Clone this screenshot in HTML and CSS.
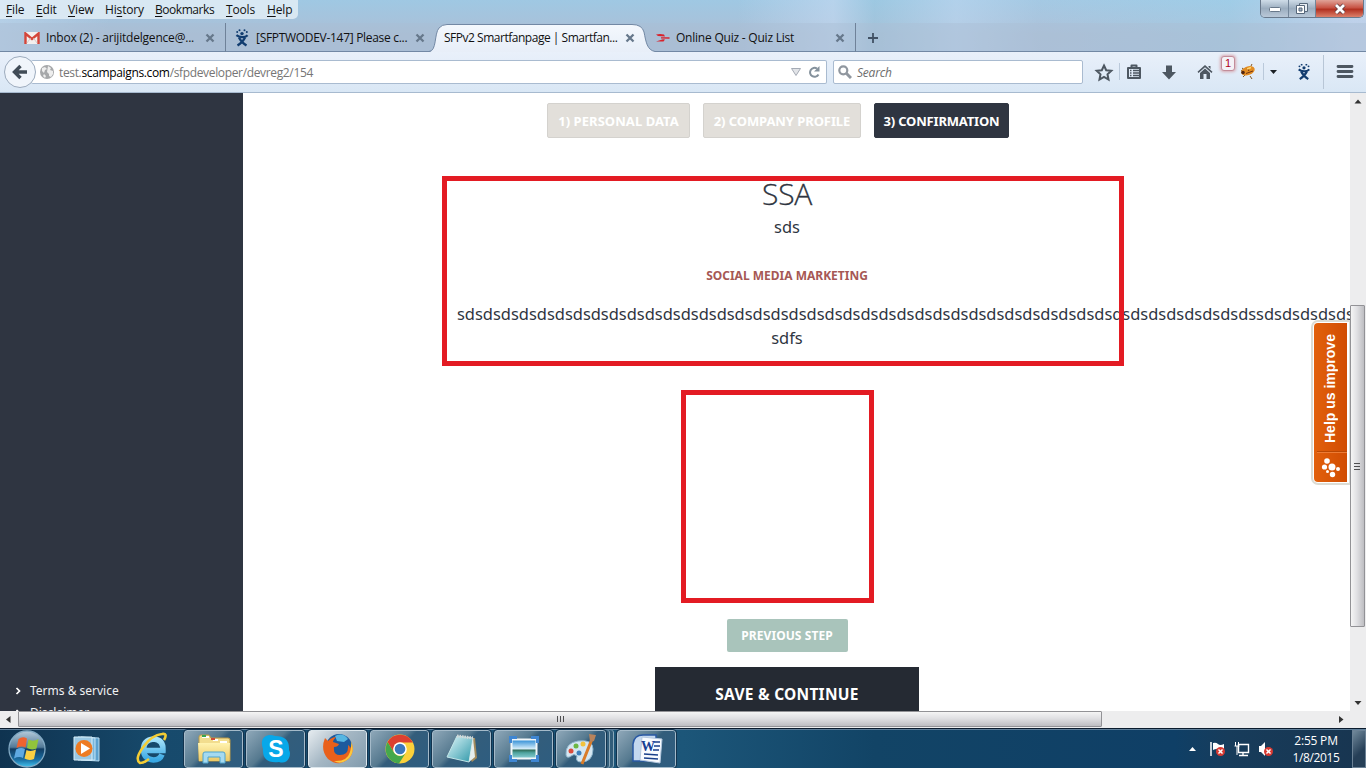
FILE: index.html
```html
<!DOCTYPE html>
<html lang="en">
<head>
<meta charset="utf-8">
<title>SFPv2 Smartfanpage</title>
<link rel="stylesheet" href="styles.css">
</head>
<body>
<svg width="0" height="0" class="defs">
  <defs>
    <symbol id="close" viewBox="0 0 10 10"><path d="M1.5 1.5l7 7M8.5 1.5l-7 7" stroke="#66788b" stroke-width="2.3"/></symbol>
    <symbol id="jira" viewBox="0 0 16 18"><g fill="#123d70"><circle cx="8" cy="4.6" r="1.7"/><circle cx="3.2" cy="3" r="1"/><circle cx="5.5" cy="1.2" r="1"/><circle cx="10.5" cy="1.2" r="1"/><circle cx="12.8" cy="3" r="1"/></g><path d="M2.400 6.200Q4.500 8 8 8.200T13.600 6.200" fill="none" stroke="#123d70" stroke-width="2.200"/><path d="M5 8.500Q7 13 12.500 16.500M11 8.500Q9 13 3.500 16.500" fill="none" stroke="#123d70" stroke-width="2.300"/></symbol>
    <symbol id="badx" viewBox="0 0 8 8"><circle cx="4" cy="4" r="4" fill="#d93a32"/><path d="M2.2 2.2l3.6 3.6M5.8 2.2L2.2 5.8" stroke="#fff" stroke-width="1.3"/></symbol>
    <linearGradient id="tabfill" x2="0" y2="1"><stop stop-color="#f4f8fd"/><stop offset="1" stop-color="#e7eef8"/></linearGradient>
    <linearGradient id="glass" x2="0" y2="1"><stop stop-color="#b5cbdb"/><stop offset=".45" stop-color="#537a98"/><stop offset=".5" stop-color="#123d63"/><stop offset=".8" stop-color="#1a6fa4"/><stop offset="1" stop-color="#42c4ef"/></linearGradient>
    <linearGradient id="gold" x2="0" y2="1"><stop stop-color="#fff3b0"/><stop offset="1" stop-color="#ecc965"/></linearGradient>
    <linearGradient id="ieb" x2="0" y2="1"><stop stop-color="#a8e3fa"/><stop offset="1" stop-color="#38a8e4"/></linearGradient>
    <linearGradient id="sea" x2="0" y2="1"><stop stop-color="#2688d4"/><stop offset=".5" stop-color="#d9effa"/><stop offset=".55" stop-color="#2e6b58"/><stop offset=".7" stop-color="#4fa5a0"/><stop offset="1" stop-color="#8fd0d8"/></linearGradient>
    <linearGradient id="pad" x2="1" y2="1"><stop stop-color="#e0f7fa"/><stop offset="1" stop-color="#2e97a8"/></linearGradient>
  </defs>
</svg>
<div class="screen">
  <header class="titlebar">
    <nav class="menu"><span class="m1"><u>F</u>ile</span><span class="m2"><u>E</u>dit</span><span class="m3"><u>V</u>iew</span><span class="m4">Hi<u>s</u>tory</span><span class="m5"><u>B</u>ookmarks</span><span class="m6"><u>T</u>ools</span><span class="m7"><u>H</u>elp</span></nav>
    <div class="winbtns">
      <span class="wb min"><svg width="12" height="6"><rect x=".5" y=".5" width="11" height="4" rx="1" fill="#fff" stroke="#68788a"/></svg></span>
      <span class="wb max"><svg width="14" height="13"><path d="M4.500 1.500h8v8h-8z" fill="#e8eef4" stroke="#56677a"/><path d="M1.500 3.500h8v8h-8z" fill="#fff" stroke="#56677a"/><path d="M4 6h3v3H4z" fill="#9fb0c0" stroke="#56677a"/></svg></span>
      <span class="wb x"><svg width="14" height="12"><path d="M3 2l8 8M11 2l-8 8" stroke="#5d3b40" stroke-width="4.4"/><path d="M3 2l8 8M11 2l-8 8" stroke="#fff" stroke-width="2.8"/></svg></span>
    </div>
  </header>
  <div class="tabs">
    <div class="tab t1"><svg class="fav" width="16" height="12" viewBox="0 0 16 12"><path d="M1 0h14v12H1z" fill="#f4efee"/><path d="M1.5 12V1.5L8 7l6.5-5.500V12" fill="none" stroke="#d44539" stroke-width="2.4"/><path d="M3 11l3.500-5M13 11L9.500 6" stroke="#d5cbc9" fill="none"/></svg><span class="tt">Inbox (2) - arijitdelgence@...</span><svg class="cl" width="10" height="10"><use href="#close"/></svg></div>
    <div class="tab t2"><svg class="fav" width="16" height="18"><use href="#jira"/></svg><span class="tt">[SFPTWODEV-147] Please c...</span><svg class="cl" width="10" height="10"><use href="#close"/></svg></div>
    <div class="tab t3"><svg class="shape" width="232" height="30" viewBox="0 0 232 30"><path d="M0 29C8 28 5 11 10 5Q13 1.500 18 1.500H203Q213 1.500 215 9C217 19 218 27 226 28.500H232V30H0z" fill="url(#tabfill)"/><path d="M0 28.500C8 28 5 11 10 5Q13 1.500 18 1.500H203Q213 1.500 215 9C217 19 218 27 226 28.500H232" fill="none" stroke="#7288a4"/></svg><span class="tt">SFPv2 Smartfanpage | Smartfan...</span><svg class="cl" width="10" height="10"><use href="#close"/></svg></div>
    <div class="tab t4"><svg class="fav" width="14" height="10" viewBox="0 0 14 10"><path d="M0 1.500Q4 .5 8 1.500L9 3.500 2 3zM5 4.200h8.500v1.600L5 5.600zM0 8.500L7 6.300l2 .3-1.500 1.900z" fill="#d8222c"/></svg><span class="tt">Online Quiz - Quiz List</span><svg class="cl" width="10" height="10"><use href="#close"/></svg></div>
    <svg class="plus" width="10" height="10"><path d="M5 0v10M0 5h10" stroke="#415164" stroke-width="1.800"/></svg>
  </div>
  <div class="toolbar">
    <div class="back"><svg width="16" height="16"><path d="M15 8H3M8.500 2L2.500 8l6 6" fill="none" stroke="#414c57" stroke-width="3.400"/></svg></div>
    <div class="url"><svg class="globe" width="14" height="14"><circle cx="7" cy="7" r="7" fill="#a6a8aa"/><path d="M2 3l3-1 2 2-2 1-1 3-2-2zM8 1l3 2-1 2 3 1v3l-2 3-2-1V9L7 7zM4 9l2 2-1 2-2-2z" fill="#eee"/></svg><span class="addr">test.<b>scampaigns.com</b>/sfpdeveloper/devreg2/154</span><svg class="drop" width="10" height="8"><path d="M.5.5h9L5 7.500z" fill="#e2e4e8" stroke="#a5abb5"/></svg><svg class="reload" width="12" height="12"><path d="M10.500 8.500A4.500 4.500 0 1 1 9 2.500" fill="none" stroke="#84919c" stroke-width="2"/><path d="M11.500 0v5.500H6z" fill="#84919c"/></svg></div>
    <div class="search"><svg width="14" height="14"><circle cx="5.300" cy="5.300" r="4" fill="none" stroke="#90979f" stroke-width="2.200"/><path d="M8.500 8.500l4.500 4.500" stroke="#90979f" stroke-width="3"/></svg><span>Search</span></div>
    <svg class="icons" width="283" height="41" viewBox="0 0 283 41">
      <path d="M21 13.500l2.200 4.700 5.100.6-3.800 3.500 1 5.200-4.500-2.600-4.500 2.600 1-5.200-3.800-3.500 5.100-.6z" fill="none" stroke="#4d5761" stroke-width="2"/>
      <path d="M36.500 11v17M180.500 11v17" stroke="#bac9da"/><path d="M240.500 3v34" stroke="#b8c6d6"/>
      <path d="M45 16h12v10H45zM48.500 15.500V13.500h5v2" fill="none" stroke="#4d5761" stroke-width="2" stroke-linejoin="round"/><path d="M47 18.500h1.500M50 18.500h6M47 21h1.500M50 21h6M47 23.500h1.500M50 23.500h6" stroke="#4d5761" stroke-width="1.300"/>
      <path d="M83 13.500h6V20h4l-7 7.500L79 20h4z" fill="#4d5761"/>
      <path d="M122 13l7.500 6.800-1 1.200-6.500-5.800-6.500 5.800-1-1.200zM117 21l5-4.500 5 4.500v6h-3.500v-5h-3v5H117z" fill="#4d5761"/><path d="M125.500 14h2v3l-2-2z" fill="#4d5761"/>
      <path d="M158 19l5-3M160 25l3-3M167 24l2 3M159 16l4 3M168 14l1-2" stroke="#81551e"/><ellipse cx="165" cy="18.800" rx="7" ry="4.300" transform="rotate(-20 165 18.800)" fill="#e28c23"/><path d="M163 21.500l7-2.500M164 16l2 3" stroke="#6e3311"/><circle cx="160" cy="20.500" r="1.800" fill="#52250f"/><path d="M164 17l4-1.500" stroke="#ffd771" stroke-width="1.500"/>
      <path d="M187 18h7l-3.500 4z" fill="#1b2025"/>
      <svg x="213" y="11.500" width="16" height="17"><use href="#jira"/></svg>
      <path d="M255 14.500h14M255 19.500h14M255 24.500h14" stroke="#4d5761" stroke-width="2.800" stroke-linecap="round"/>
    </svg>
    <span class="badge">1</span>
  </div>
  <div class="viewrow">
    <div class="view">
      <aside class="side"><div class="link"><svg width="6" height="8"><path d="M1.500 1L4.500 4l-3 3" fill="none" stroke="#fff" stroke-width="1.700"/></svg><span>Terms &amp; service</span></div><div class="link"><svg width="6" height="8"><path d="M1.500 1L4.500 4l-3 3" fill="none" stroke="#fff" stroke-width="1.700"/></svg><span>Disclaimer</span></div></aside>
      <main class="page">
        <div class="steps"><span class="step s1"><i>1) PERSONAL DATA</i></span><span class="step s2"><i>2) COMPANY PROFILE</i></span><span class="step s3 on"><i>3) CONFIRMATION</i></span></div>
        <section class="info"><h1>SSA</h1><p class="sub">sds</p><h2>SOCIAL MEDIA MARKETING</h2><p class="long">sdsdsdsdsdsdsdsdsdsdsdsdsdsdsdsdsdsdsdsdsdsdsdsdsdsdsdsdsdsdsdsdsdsdsdsdsdsdsdsdsdsdsdsdssdsdsdsdsdsdsd</p><p class="last">sdfs</p></section>
        <div class="actions"><span class="prev"><i>PREVIOUS STEP</i></span><span class="save"><i>SAVE &amp; CONTINUE</i></span></div>
      </main>
      <div class="mark m-a"></div><div class="mark m-b"></div>
      <div class="help"><span>Help us improve</span><svg width="34" height="31"><path d="M3 .5h30" stroke="#b94804"/><path d="M3 1.500h30" stroke="#ed7c35"/><g fill="#fff"><circle cx="18" cy="16" r="3.500"/><circle cx="13" cy="10" r="2.800"/><circle cx="10.500" cy="16" r="2.600"/><circle cx="13.500" cy="20.500" r="1.500"/><circle cx="18.500" cy="23.500" r="2.700"/><circle cx="24" cy="18" r="2"/></g></svg></div>
    </div>
    <div class="vbar"><svg width="16" height="17"><path d="M4.500 10.500h7L8 6.500z" fill="#333"/></svg><div class="vthumb"><svg width="7" height="9"><path d="M0 1.500h6M0 4.500h6M0 7.500h6" stroke="#4e4e50"/></svg></div><svg class="down" width="16" height="17"><path d="M4.500 7h7L8 11z" fill="#333"/></svg></div>
  </div>
  <div class="hbar"><svg width="18" height="17"><path d="M10.500 5v7L6 8.500z" fill="#333"/></svg><div class="hthumb"><svg width="9" height="7"><path d="M1.500 0v6M4.500 0v6M7.500 0v6" stroke="#4e4e50"/></svg></div><svg class="right" width="18" height="17"><path d="M7 5v7l4.500-3.500z" fill="#333"/></svg></div>
  <footer class="taskbar">
    <div class="app plain start"><svg width="40" height="38" viewBox="0 0 40 38"><circle cx="20" cy="19" r="18" fill="url(#glass)" stroke="#82aac4" stroke-width="1.300"/><path d="M11.500 9q4-3 8.500-.5l-1.500 9q-4-2-9 .5z" fill="#ee6330"/><path d="M21.500 9.500q4.500 2.500 10-.5l-2 9.500q-5 2-9.500-.5z" fill="#91c43c"/><path d="M9 19.500q5-2.500 9-.5l-2 9q-4-2-9 .5z" fill="#5ea9e2"/><path d="M19.500 20q4.500 2 9.500-.5l-2 9.500q-5 2-9.500-.5z" fill="#fbd043"/></svg></div>
    <div class="app plain"><svg width="28" height="28" viewBox="0 0 28 28"><path d="M8 2l18 1v23l-18-1z" fill="#5ba1ce" stroke="#b9dcf0"/><path d="M5 2l17 1v22H5z" fill="#79b7dd" stroke="#c7e5f5"/><path d="M1 2h18v23H1z" fill="#9bc8e3" stroke="#d9eff9"/><circle cx="11" cy="13.500" r="8.500" fill="#ee7b22"/><path d="M8 8l9 5.500L8 19z" fill="#fff"/></svg></div>
    <div class="app plain ie"><svg width="34" height="34" viewBox="0 0 34 34"><path d="M27 22.500Q25 28 18.500 28 8.500 27 8.500 17.500T18.500 7Q28.500 7.500 28 18.500H10" fill="none" stroke="url(#ieb)" stroke-width="5.500"/><path d="M29 8Q33 1 27 2 17 3 9 14-1 27 5 31q4 0 9-4" fill="none" stroke="#f3cd35" stroke-width="2.600"/></svg></div>
    <div class="app"><svg width="34" height="30" viewBox="0 0 34 30"><path d="M2 3q0-2 2-2h8l2 3h17q2 0 2 2v21H2z" fill="#f2dd8e" stroke="#b99947"/><path d="M5 3h7M16 6h5M23 8h7" stroke="#fff" stroke-width="2"/><path d="M5 2h4" stroke="#38a54d" stroke-width="2"/><path d="M14 5h4" stroke="#ce4b36" stroke-width="2"/><path d="M1 9h32l-1 18H2z" fill="url(#gold)"/><path d="M6 29V20q0-2 2-2h18q2 0 2 2v9h-5v-6H11v6z" fill="#a5daf0" stroke="#4fa4ce"/></svg></div>
    <div class="app"><svg width="30" height="30" viewBox="0 0 30 30"><path d="M8 1q4 0 6 1 15 0 14 14 2 3 0 8-3 6-10 4Q1 30 2 15-2 3 8 1z" fill="#08a8e9"/><text x="15" y="23" text-anchor="middle" class="g-s">S</text></svg></div>
    <div class="app active"><svg width="32" height="32" viewBox="0 0 32 32"><circle cx="17" cy="14" r="13" fill="#1d5a9e"/><path d="M13 3q8-4 13 3l-4 3-7-1z" fill="#56b6e1"/><path d="M29 8Q34 20 25 27 16 34 6 26-2 17 3 5q2 2 3 3 4-4 8-4-3 3-3 5l6 2q-1 3-5 3-1 8 6 8 9 0 8-10 2 1 2 3 3-3 1-7z" fill="#e9601b"/><path d="M29 8q5 12-4 19-7 5-13 1 13 1 16-9 2-7 1-11z" fill="#fcc83e"/></svg></div>
    <div class="app"><svg width="30" height="30" viewBox="0 0 30 30"><circle cx="15" cy="15" r="14.500" fill="#fbd13a"/><path d="M2.500 8A14.500 14.500 0 0 1 28 8.500H15a7 7 0 0 0-6 10z" fill="#dc4030"/><path d="M2.500 8A14.500 14.500 0 0 0 14 29.500L21 18.500a7 7 0 0 1-12 0z" fill="#45a84c"/><circle cx="15" cy="15" r="6.800" fill="#fff"/><circle cx="15" cy="15" r="5.300" fill="#3b78bd"/></svg></div>
    <div class="app"><svg width="34" height="30" viewBox="0 0 34 30"><path d="M13 3l17 1 2 20-5 4z" fill="#a28b5d"/><path d="M12 2l16 2-4 24-22-5z" fill="url(#pad)" stroke="#c2e6e8"/><path d="M28 4l2 19-6 5z" fill="#e5eeee"/><path d="M12 2l16 2" stroke="#d3d7d8" stroke-width="3" stroke-dasharray="1.500 1"/></svg></div>
    <div class="app"><svg width="30" height="26" viewBox="0 0 30 26"><path d="M2.500 3.500h25v19h-25z" fill="url(#sea)" stroke="#f2f7f9" stroke-width="2"/><path d="M1.500 7V1.500H8M22 1.500h6.500V7M28.500 19v5.500H22M8 24.500H1.500V19" fill="none" stroke="#3f86d2" stroke-width="3"/></svg></div>
    <div class="app stack"><svg width="34" height="32" viewBox="0 0 34 32"><path d="M2 22Q1 10 14 8q15-2 15 8 0 13-12 13-6 0-4-6-3-3-6 0-4 3-5-1z" fill="#d5e7f2" stroke="#8eb5cd"/><circle cx="7" cy="18" r="2.500" fill="#db4c3c"/><circle cx="12" cy="13" r="2.500" fill="#6cb843"/><circle cx="19" cy="11" r="2.500" fill="#f2c33d"/><circle cx="15" cy="20" r="2.500" fill="#3e7fbb"/><path d="M28 6L18 31" stroke="#da7c28" stroke-width="3"/><path d="M25 1l7 1-2 6-4 1z" fill="#b7835c"/></svg></div>
    <div class="app word"><svg width="32" height="30" viewBox="0 0 32 30"><path d="M2 27V10Q3 1 12 1h13v26z" fill="#c4d8ef" stroke="#2858a4" stroke-width="1.500"/><path d="M11 3l20 2-2 24-20-3z" fill="#f8fbff" stroke="#b3c7de"/><path d="M23 8h6M23 12h6M22 16h6M13 20l14 1M13 24l14 1" stroke="#183f8a" stroke-width="1.700"/><text x="10" y="17" class="g-w">W</text></svg></div>
    <div class="tray"><svg width="90" height="20" viewBox="0 0 90 20"><path d="M3 12h7l-3.500-4z" fill="#fff"/><path d="M25 3v14" stroke="#fff" stroke-width="1.500"/><path d="M27 4q3-1 5 1t6 0v6q-3 2-5 0t-6 0z" fill="#fff"/><svg x="30" y="8" width="9" height="9" viewBox="0 0 8 8"><use href="#badx"/></svg><path d="M52.500 5.500h10v8h-10zM57 14v3M53 16.500h9" fill="none" stroke="#fff" stroke-width="1.400"/><path d="M49.500 3v4M52.500 3v4M48.500 7h5M51 7v9" stroke="#fff" fill="none"/><path d="M73 7h2l4-4v14l-4-4h-2z" fill="#fff"/><svg x="78" y="8" width="9" height="9" viewBox="0 0 8 8"><use href="#badx"/></svg></svg></div>
    <div class="clock"><span class="c1">2:55 PM</span><span class="c2">1/8/2015</span></div>
    <div class="peek"></div>
  </footer>
</div>
</body>
</html>
```
FILE: styles.css
```css
* { box-sizing: border-box; }
body { margin: 0; font-family: "Open Sans", "Noto Sans", sans-serif; color: #111; overflow: hidden; }
.defs { position: absolute; }
svg { display: block; flex: none; }
i { font-style: normal; }
.screen { width: 1366px; height: 768px; display: flex; flex-direction: column; white-space: nowrap; overflow: hidden;
  background: linear-gradient(90deg, rgba(190,215,238,.6), rgba(180,205,230,0) 8%, rgba(190,210,235,0) 54%, rgba(198,218,242,.6) 61%, rgba(150,200,222,.3) 64%, rgba(190,215,240,.6) 70%, rgba(185,205,230,.2) 76%, rgba(160,215,240,.3) 90%, rgba(200,215,240,.7) 99%), linear-gradient(#9fc8e3, #a6c3dc 20px, #a9bed4 34px, #a9bdd5 52px); }
.titlebar { height: 23px; display: flex; justify-content: space-between; }
.menu { width: 298px; height: 19px; display: flex; padding-left: 6px; background: rgba(226,237,246,.85); border-radius: 0 0 5px 0; font-size: 12px; line-height: 19px; letter-spacing: -.15px; }
.menu u { text-underline-offset: 2px; }
.m1 { width: 30px; } .m2 { width: 32px; } .m3 { width: 37px; } .m4 { width: 50px; } .m5 { width: 71px; letter-spacing: -.45px; } .m6 { width: 41px; }
.winbtns { display: flex; width: 104px; height: 18px; margin-right: 2px; border: 1px solid #69798c; border-top: 0; border-radius: 0 0 5px 5px; overflow: hidden; }
.wb { display: flex; align-items: center; justify-content: center; background: linear-gradient(#cfdce8, #9badbf 50%, #b9c8d8); border-right: 1px solid #73869a; }
.min { width: 28px; padding-top: 3px; } .max { width: 27px; } .x { flex: 1; border: 0; background: linear-gradient(#e0a398, #c85445 45%, #b23121 55%, #dc806b); }
.tabs { height: 29px; display: flex; border-bottom: 1px solid #7288a4; font-size: 12px; background: rgba(170,190,212,.45); }
.tab { display: flex; align-items: center; height: 29px; position: relative; flex: none; }
.cl { margin-left: auto; }
.fav { margin-right: 6px; }
.t1 { width: 226px; padding: 0 10px 0 24px; border-right: 1px solid #6f8299; }
.t1 .tt { letter-spacing: -.2px; } .t2 .tt { letter-spacing: -.3px; } .t3 .tt { letter-spacing: -.48px; } .t4 .tt { letter-spacing: -.22px; }
.t2 { width: 207px; padding: 0 8px; }
.t3 { width: 217px; padding: 0 15px 0 11px; }
.shape { position: absolute; left: -4px; top: 0; }
.t3 .tt, .t3 .cl { position: relative; }
.t4 { width: 206px; padding: 0 10px 0 6px; border-right: 1px solid #6f8299; }
.plus { margin: 10px 0 0 12px; }
.toolbar { height: 41px; display: flex; align-items: center; position: relative; background: linear-gradient(#e9f0fa, #d9e7f5); border-bottom: 1px solid #a7bacf; }
.back { width: 32px; height: 32px; margin-left: 4px; border: 1px solid #9cabbd; border-radius: 50%; background: #f0f5fb; display: flex; align-items: center; justify-content: center; z-index: 1; }
.url { width: 796px; height: 24px; margin-left: -5px; display: flex; align-items: center; padding: 0 6px 0 9px; border: 1px solid #a9bbd0; border-left: 0; border-radius: 2px; background: #fff; font-size: 12px; color: #767676; }
.addr { margin-left: 5px; letter-spacing: -.35px; } .addr b { font-weight: 400; color: #000; }
.drop { margin-left: auto; margin-right: 7px; }
.search { width: 250px; height: 24px; margin-left: 6px; display: flex; align-items: center; border: 1px solid #a9bbd0; border-radius: 2px; background: #fff; padding-left: 4px; font-size: 12px; font-style: italic; color: #6d6d6d; }
.search span { margin-left: 5px; letter-spacing: -.2px; }
.badge { position: absolute; left: 1221px; top: 4px; width: 14px; height: 15px; border-radius: 3px; border: 1px solid #c28d9a; background: #f4f2f7; box-shadow: 0 0 3px 1px #d7a8b0; color: #b00018; font: 11px/13px "Liberation Sans", sans-serif; text-align: center; }
.viewrow { height: 618px; display: flex; }
.view { width: 1350px; display: flex; position: relative; overflow: hidden; background: #fff; }
.side { width: 243px; background: #2f3541; padding-top: 588px; color: #f0f1f3; font: 12px/20px "Noto Sans", sans-serif; overflow: hidden; }
.link { display: flex; align-items: center; padding-left: 15px; gap: 9px; height: 20px; margin-bottom: 2px; }
.page { width: 1107px; display: flex; flex-direction: column; font-family: "Noto Sans", sans-serif; color: #2f3541; }
.steps { display: flex; margin: 10px 0 0 304px; gap: 13px; font-size: 13px; font-weight: 700; color: #fff; }
.step { height: 35px; display: flex; align-items: center; justify-content: center; background: #e2dfda; border: 1px solid #d4d2ce; border-radius: 2px; }
.s1 { width: 143px; letter-spacing: .06px; } .s2 { width: 158px; letter-spacing: -.08px; } .s3 { width: 135px; letter-spacing: -.18px; }
.step.on { background: #2f3541; border-color: #2f3541; }
.info { width: 660px; margin: 38px 0 0 214px; text-align: center; }
.info h1 { margin: 0; font: 300 30px/36px "Open Sans", sans-serif; letter-spacing: -.3px; -webkit-text-stroke: .3px #2f3541; }
.info p { margin: 0; font-size: 16.450px; line-height: 24px; }
.info .sub { padding-top: 3px; height: 27px; }
.info h2 { margin: 25px 0 0; font-size: 12px; line-height: 24px; color: #a65855; font-weight: 700; height: 38px; }
.info .long { text-align: left; }
.actions { width: 264px; margin: 269px 0 0 412px; display: flex; flex-direction: column; align-items: center; color: #fff; font-weight: 700; }
.prev { width: 121px; height: 33px; background: #a9c4bb; border-radius: 2px; font-size: 12px; display: flex; align-items: center; justify-content: center; letter-spacing: .07px; }
.save { width: 264px; height: 53px; margin-top: 15px; background: #252a33; font-size: 15.500px; letter-spacing: .25px; display: flex; align-items: center; justify-content: center; }
.mark { position: absolute; border: 5px solid #e31b23; }
.m-a { left: 442px; top: 83px; width: 682px; height: 190px; }
.m-b { left: 681px; top: 297px; width: 193px; height: 213px; }
.help { position: absolute; left: 1312px; top: 228px; width: 38px; height: 163px; background: linear-gradient(90deg, #e2600c, #d14d02) content-box; padding: 2px 3px 2px 2px; border-radius: 6px 0 0 6px; box-shadow: 0 0 0 1px #dcdcd4; background-color: #fff; display: flex; flex-direction: column; align-items: center; }
.help span { height: 128px; writing-mode: vertical-rl; transform: rotate(180deg); color: #fff; font: bold 14px/33px "Liberation Sans", sans-serif; text-align: center; padding-bottom: 3px; }
.vbar { width: 16px; background: #ededee; display: flex; flex-direction: column; }
.vthumb { width: 15px; height: 322px; margin-top: 195px; border: 1px solid #929296; border-radius: 1px; background: linear-gradient(90deg, #f5f5f5, #e0e0e3 45%, #bebec2); display: flex; align-items: center; justify-content: center; }
.down { margin-top: auto; }
.hbar { height: 17px; display: flex; background: #ededee; }
.hthumb { width: 1084px; height: 16px; border: 1px solid #929296; border-radius: 1px; background: linear-gradient(#f5f5f5, #e0e0e3 45%, #bebec2); display: flex; align-items: center; justify-content: center; }
.right { margin-left: auto; margin-right: 16px; }
.taskbar { height: 40px; display: flex; align-items: center; padding-top: 1px; border-top: 1px solid #0a1b2d; box-shadow: inset 0 1px #5f7f9a; background: linear-gradient(90deg, #0f3350, #174a6c 12%, #1c5679 50%, #124466 64%, #0f3f66 86%, #173c5b 90%, #183550); }
.app { width: 59px; height: 38px; margin-right: 3px; border: 1px solid #a4bac9; border-radius: 3px; outline: 1px solid #12334e; background: linear-gradient(135deg, #8fa8b9, #55798f 42%, #335d7b 50%, #2e5d80); display: flex; align-items: center; justify-content: center; flex: none; }
.plain { border: 0; outline: 0; background: none; width: 65px; margin: 0; }
.start { width: 54px; } .ie { width: 65px; }
.active { background: linear-gradient(135deg, #e5ebef, #a5b7c4 45%, #819bad); border-color: #dce6ec; }
.stack { width: 50px; box-shadow: 3px 0 0 #315d7a, 4px 0 0 #8ba9bb, 7px 0 0 #315d7a, 8px 0 0 #8ba9bb; margin-right: 11px; }
.g-s { font: bold 23px "Liberation Sans", sans-serif; fill: #fff; }
.g-w { font: bold 14px "Liberation Serif", serif; fill: #174093; }
.tray { margin-left: auto; }
.clock { width: 68px; margin-left: 6px; display: flex; flex-direction: column; align-items: center; font-size: 12px; line-height: 17px; color: #fff; letter-spacing: -.35px; }
.clock .c1 { letter-spacing: -.2px; }
.peek { width: 14px; height: 38px; margin-left: 2px; border: 1px solid #6b8195; background: linear-gradient(135deg, #71899b, #263f57 60%); }
```
